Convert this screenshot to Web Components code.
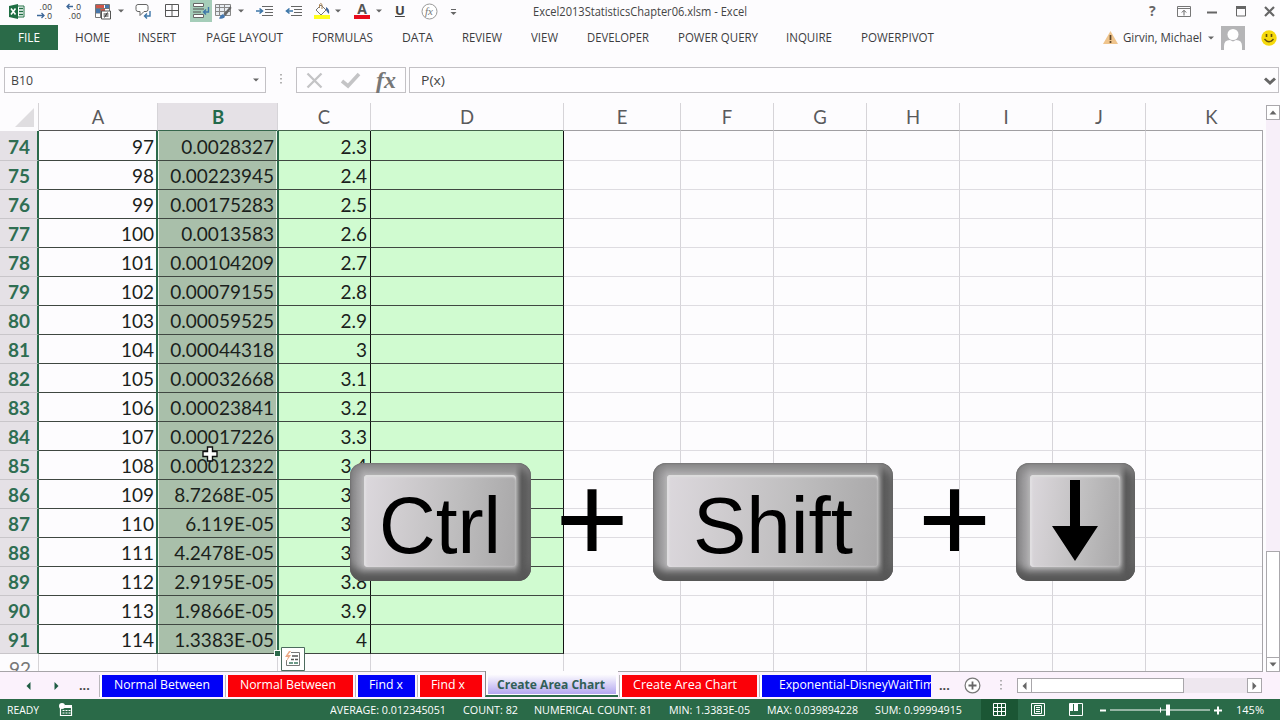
<!DOCTYPE html>
<html lang="en">
<head>
<meta charset="utf-8">
<title>Excel2013StatisticsChapter06.xlsm - Excel</title>
<style>
    body {
        margin: 0;
        width: 1280px;
        height: 720px;
        overflow: hidden;
        background: #fdfcfe;
        font-family: "Open Sans", "Noto Sans", sans-serif;
    }
</style>
</head>
<body>
<excel-window></excel-window>

<script>
const green = "#2a6a48";

const icons = {
    excel: [17, 17, `<path d="M1 3 10 1v15L1 14z" fill="#1f6e43"/><path d="M10 3h6v11h-6" fill="#fff" stroke="#1f6e43"/><path d="M11 5.5h4M11 8.5h4M11 11.5h4" stroke="#1f6e43" stroke-width="1.6"/><path d="m3 5.5 4.5 6M7.5 5.5 3 11.5" stroke="#fff" stroke-width="1.6"/>`],
    decLess: [16, 16, `<g font-family="Liberation Sans" font-size="8.500" fill="#444"><text x="2.500" y="6.500" textLength="12.500">.00</text><text x="7.500" y="16" textLength="7.500">.0</text></g><path d="M0 12.500h7M4.500 10l2.500 2.500-2.500 2.500" fill="none" stroke="#3d6799" stroke-width="1.300"/>`],
    decMore: [16, 16, `<g font-family="Liberation Sans" font-size="8.500" fill="#444"><text x="7.500" y="6.500" textLength="7.500">.0</text><text x="2.500" y="16" textLength="12.500">.00</text></g><path d="M7 3.500H1M3.500 1 1 3.500 3.500 6" fill="none" stroke="#3d6799" stroke-width="1.300"/>`],
    cond: [17, 17, `<path d="M.5 1.500h14v13h-14zM.5 5.500h14M.5 10h14M5.500 1v14" fill="#fff" stroke="#777"/><path d="M1 2h8v3H1zM6 6h4v3H6z" fill="#d05548"/><path d="M10 2h4v3h-4zM1 6h4v4H1z" fill="#4776ab"/><path d="M6.500 8h9v8h-9z" fill="#fff" stroke="#555"/><path d="M8.500 11h5M8.500 13h5M12.500 9.500l-3 5" stroke="#333"/>`],
    comment: [17, 17, `<path d="M3 1.500h8q2 0 2 2v3q0 2-2 2H9l-4 4v-4H3q-2 0-2-2v-3q0-2 2-2z" fill="#fff" stroke="#666"/><path d="M15 8v5h-5M12 10.500 9.500 13l2.500 2.500" fill="none" stroke="#3d76a8" stroke-width="1.400"/>`],
    borders: [14, 14, `<path d="M.5.5h13v12H.5zM7 .5v12M.5 6.500h13" fill="none" stroke="#555"/>`],
    wrap: [18, 17, `<path d="M1.500 1.500h10v3h-10zM1.500 12.500h10v3h-10z" fill="#fff" stroke="#666"/><path d="M1 7h11M1 10h8" stroke="#555"/><path d="M16.500 5v5H12m2-2.500L11.500 10l2.500 2.500" fill="none" stroke="#3d76a8" stroke-width="1.400"/>`],
    tableFmt: [17, 17, `<path d="M.5 1.500h15v11H.5zM.5 4.500h15M.5 8.500h15M4.500 1v12M9.500 1v12" fill="#e8edf2" stroke="#888"/><path d="m15.500 3-7 8 2 2 6-8z" fill="#666"/><path d="M8 11q-3 1-4 4.500 5 1 6-2.500z" fill="#4477b0"/>`],
    indent: [17, 13, `<path d="M6 1.500h11M9 4.500h8M9 7.500h8M6 10.500h11" stroke="#666"/><path d="M0 6h6M3.500 3.500 6.500 6l-3 2.500" fill="none" stroke="#3d76a8" stroke-width="1.600"/>`],
    outdent: [17, 13, `<path d="M5 1.500h11M8 4.500h8M8 7.500h8M5 10.500h11" stroke="#666"/><path d="M7 6H1M3.500 3.500.5 6l3 2.500" fill="none" stroke="#3d76a8" stroke-width="1.600"/>`],
    fill: [18, 17, `<path d="M1 12h16v4H1z" fill="#ffff1c"/><path d="m3 7 5-5 5 5-5 5z" fill="#fff" stroke="#777"/><path d="M6.500 5V1.500q1.500-2 2.500 0V6" fill="none" stroke="#a98557"/><path d="M13 4q4 2 3 7-2-2-3-4z" fill="#46699a"/>`],
    font: [16, 17, `<path d="M0 12h16v4H0z" fill="#e80c1c"/><text x="8" y="11" text-anchor="middle" font-size="14" font-weight="bold" fill="#555">A</text>`],
    fxRound: [17, 17, `<circle cx="8.500" cy="8.500" r="7.500" fill="#fff" stroke="#999"/><text x="8" y="12" text-anchor="middle" font-family="Liberation Serif" font-style="italic" font-size="11" fill="#777">fx</text>`],
    more: [7, 7, `<path d="M1 .5h5" stroke="#666"/><path d="M.5 3h6l-3 3z" fill="#666"/>`],
    caret: [6, 4, `<path d="M0 .5h6l-3 3z" fill="#666"/>`],
    ribbonOpts: [14, 11, `<path d="M.5.5h13v10H.5zM.5 2.500h13" fill="none" stroke="#777"/><path d="M7 9.500V4.500M4.800 6.500 7 4.300l2.200 2.200" fill="none" stroke="#666"/>`],
    min: [10, 3, `<path d="M0 1.500h10" stroke="#666" stroke-width="2"/>`],
    max: [10, 11, `<path d="M.5 1h9v9h-9z" fill="none" stroke="#666"/><path d="M0 1.500h10" stroke="#666" stroke-width="3"/>`],
    close: [11, 11, `<path d="m1 1 9 9M10 1l-9 9" stroke="#666" stroke-width="2.200"/>`],
    warn: [15, 13, `<path d="M7.500 0 15 13H0z" fill="#efc48c"/><path d="M7.500 4v5M7.500 10v2" stroke="#5c4326" stroke-width="1.700"/>`],
    person: [24, 24, `<path d="M0 0h24v24H0z" fill="#b5b5b7"/><circle cx="12" cy="8.500" r="5.500" fill="#fff"/><path d="M3 24v-4q0-6 6-6l3 1.500 3-1.500q6 0 6 6v4z" fill="#fff"/>`],
    smile: [16, 16, `<circle cx="8" cy="8" r="7.700" fill="#f5d90c"/><path d="M5.500 4v3M10.500 4v3" stroke="#604d10" stroke-width="1.600"/><path d="M3.500 9q4.500 5.500 9 0" fill="none" stroke="#604d10" stroke-width="1.300"/>`],
    dots: [2, 12, `<path d="M1 0v12" stroke="#999" stroke-width="1.500" stroke-dasharray="1.500 2.500"/>`],
    cancel: [18, 17, `<path d="m1.500 1.500 14 14M15.500 1.500l-14 14" stroke="#c4c4c6" stroke-width="2.300"/>`],
    enter: [19, 15, `<path d="m1 8 6 5L18 1" fill="none" stroke="#c4c4c6" stroke-width="3.600"/>`],
    expand: [12, 9, `<path d="m1 1.500 5 4.500 5-4.500" fill="none" stroke="#666" stroke-width="3"/>`],
    corner: [19, 19, `<path d="M19 0v19H0z" fill="#dfdde0"/>`],
    up: [8, 5, `<path d="M4 .5 7.500 4.500h-7z" fill="#666"/>`],
    down: [8, 5, `<path d="M4 4.500 7.500.5h-7z" fill="#666"/>`],
    left: [5, 8, `<path d="M4.500 0v8L.5 4z" fill="#666"/>`],
    right: [5, 8, `<path d="M.5 0v8l4-4z" fill="#666"/>`],
    prev: [5, 8, `<path d="M4.500 0v8L.5 4z" fill="#1e5c43"/>`],
    next: [5, 8, `<path d="M.5 0v8l4-4z" fill="#1e5c43"/>`],
    add: [17, 17, `<circle cx="8.500" cy="8.500" r="7.400" fill="#fff" stroke="#777" stroke-width="1.200"/><path d="M4.500 8.500h8M8.500 4.500v8" stroke="#666" stroke-width="1.800"/>`],
    macro: [14, 13, `<path d="M1.500 4.500h11v8h-11z" fill="none" stroke="#fff" stroke-width="1.200"/><path d="M6 3.500h7" stroke="#fff" stroke-width="3"/><path d="M3.500 7.500h8M3.500 10h8" stroke="#fff" stroke-dasharray="2 1"/><circle cx="3" cy="3" r="3" fill="#fff"/>`],
    viewNormal: [13, 13, `<path d="M.5.5h12v12H.5zM4.500 0v13M8.500 0v13M0 4.500h13M0 8.500h13" fill="none" stroke="#fff"/>`],
    viewPage: [14, 13, `<path d="M.5.5h13v12H.5zM3.500 2.500h7v8h-7zM5 4.500h4M5 6.500h4M5 8.500h4" fill="none" stroke="#fff"/>`],
    viewBreak: [14, 13, `<path d="M.5.5h13v12H.5z" fill="none" stroke="#fff"/><path d="M1 1h3v7H1zM5 1h4v7H5z" fill="#fff"/>`],
    zoom: [122, 12, `<path d="M0 6.500h6M114 6.500h8M118 2.500v8" stroke="#fff" stroke-width="2"/><path d="M10 6h100M60.500 3.500v5" stroke="#fff"/><path d="M66 .500h4v11h-4z" fill="#fff"/>`],
    quick: [24, 24, `<path d="M.5.500h23v23H.5z" fill="#fff" stroke="#4c6b5e"/><path d="M10 5.500h8.500v13h-13V13" fill="none" stroke="#777"/><path d="M11 9h6M10 12.500h3M14 12.500h3" stroke="#555" stroke-width="1.500"/><path d="M8 16h4M13 16h4" stroke="#3f7a63" stroke-width="1.500"/><path d="M8 4 4 10h3l-2 5 5-7H7l3-4z" fill="#eba987"/>`],
    cross: [16, 16, `<path d="M5.500 1h5v4.500H15v5h-4.500V15h-5v-4.500H1v-5h4.500z" fill="#fff" stroke="#111" stroke-width="1.400"/>`],
    arrow: [48, 82, `<path d="M19 0h10v46h18L24 81 1 46h18z" fill="#000"/>`]
};

class UiIcon extends HTMLElement {
    connectedCallback() {
        const [w, h, art] = icons[this.getAttribute("name")];
        this.attachShadow({ mode: "open" }).innerHTML = `
            <style>
                :host { display: inline-block; flex: none; width: ${w}px; height: ${h}px; }
                svg { display: block; overflow: visible; }
            </style>
            <svg width="${w}" height="${h}" viewBox="0 0 ${w} ${h}">${art}</svg>`;
    }
}
customElements.define("ui-icon", UiIcon);

// Label squeezed or stretched to a set width
class FitText extends HTMLElement {
    connectedCallback() {
        const width = Number(this.getAttribute("w"));
        this.attachShadow({ mode: "open" }).innerHTML = `
            <style>
                :host { display: inline-block; flex: none; width: ${width}px; white-space: nowrap; }
                span { display: inline-block; transform-origin: 0 50%; }
            </style>
            <span><slot></slot></span>`;
        const span = this.shadowRoot.querySelector("span");
        const natural = span.getBoundingClientRect().width;
        if (natural) {
            span.style.transform = `scaleX(${width / natural})`;
        }
    }
}
customElements.define("fit-text", FitText);

class TitleBar extends HTMLElement {
    connectedCallback() {
        this.attachShadow({ mode: "open" }).innerHTML = `
            <style>
                :host {
                    display: grid;
                    height: 25px;
                    grid-template-columns: 8px 29px 29px 29px 23px 17px 30px 25px 25px 23px 18px 30px 27px 22px 19px 22px 19px 26px 29px 83px 616px 28px 30px 29px 28px 1fr;
                    align-items: start;
                    font-size: 12px;
                    color: #444;
                }
                ui-icon { margin-top: 3px; }
                ui-icon[name="borders"] { margin-top: 4px; }
                ui-icon[name="caret"] { margin-top: 9px; }
                ui-icon[name="indent"], ui-icon[name="outdent"] { margin-top: 5px; }
                ui-icon[name="more"] { margin-top: 9px; }
                .on { display: flex; width: 22px; height: 22px; background: #a5cdb9; justify-content: center; }
                .on ui-icon { margin-top: 2px; }
                .u { font-weight: bold; font-size: 13px; line-height: 21px; text-decoration: underline; }
                .name { line-height: 23px; }
                .help { font-weight: bold; font-size: 14px; line-height: 22px; color: #666; }
                .min { margin-top: 11px; }
                .win { margin-top: 6px; }
            </style>
            <i></i>
            <ui-icon name="excel"></ui-icon>
            <ui-icon name="decLess"></ui-icon>
            <ui-icon name="decMore"></ui-icon>
            <ui-icon name="cond"></ui-icon>
            <ui-icon name="caret"></ui-icon>
            <ui-icon name="comment"></ui-icon>
            <ui-icon name="borders"></ui-icon>
            <div class="on"><ui-icon name="wrap"></ui-icon></div>
            <ui-icon name="tableFmt"></ui-icon>
            <ui-icon name="caret"></ui-icon>
            <ui-icon name="indent"></ui-icon>
            <ui-icon name="outdent"></ui-icon>
            <ui-icon name="fill"></ui-icon>
            <ui-icon name="caret"></ui-icon>
            <ui-icon name="font"></ui-icon>
            <ui-icon name="caret"></ui-icon>
            <span class="u">U</span>
            <ui-icon name="fxRound"></ui-icon>
            <ui-icon name="more"></ui-icon>
            <fit-text class="name" w="214">Excel2013StatisticsChapter06.xlsm - Excel</fit-text>
            <span class="help">?</span>
            <ui-icon class="win" name="ribbonOpts"></ui-icon>
            <ui-icon class="min" name="min"></ui-icon>
            <ui-icon class="win" name="max"></ui-icon>
            <ui-icon class="win" name="close"></ui-icon>`;
    }
}
customElements.define("title-bar", TitleBar);

class RibbonTabs extends HTMLElement {
    connectedCallback() {
        this.attachShadow({ mode: "open" }).innerHTML = `
            <style>
                :host {
                    display: grid;
                    height: 25px;
                    grid-template-columns: 58px 17px 63px 68px 106px 90px 60px 69px 56px 91px 108px 75px 242px 20px 85px 13px 40px 1fr;
                    align-items: center;
                    font-size: 12.5px;
                    line-height: 25px;
                    color: #3c3c3e;
                }
                .file { background: ${green}; color: #fff; height: 25px; text-align: center; }
            </style>
            <div class="file"><fit-text w="22">FILE</fit-text></div>
            <i></i>
            <fit-text w="35">HOME</fit-text>
            <fit-text w="38">INSERT</fit-text>
            <fit-text w="77">PAGE LAYOUT</fit-text>
            <fit-text w="61">FORMULAS</fit-text>
            <fit-text w="31">DATA</fit-text>
            <fit-text w="40">REVIEW</fit-text>
            <fit-text w="27">VIEW</fit-text>
            <fit-text w="62">DEVELOPER</fit-text>
            <fit-text w="80">POWER QUERY</fit-text>
            <fit-text w="46">INQUIRE</fit-text>
            <fit-text w="73">POWERPIVOT</fit-text>
            <ui-icon name="warn"></ui-icon>
            <fit-text w="79">Girvin, Michael</fit-text>
            <ui-icon name="caret"></ui-icon>
            <ui-icon name="person"></ui-icon>
            <ui-icon name="smile"></ui-icon>`;
    }
}
customElements.define("ribbon-tabs", RibbonTabs);

class FormulaBar extends HTMLElement {
    connectedCallback() {
        this.attachShadow({ mode: "open" }).innerHTML = `
            <style>
                :host {
                    display: flex;
                    height: 53px;
                    padding: 17px 1px 0 4px;
                    box-sizing: border-box;
                    font-size: 12px;
                    color: #444;
                }
                div {
                    display: flex;
                    height: 26px;
                    box-sizing: border-box;
                    border: 1px solid #c3c1c5;
                    background: #fefdff;
                    align-items: center;
                    justify-content: space-between;
                }
                .name { width: 262px; padding: 0 6px; }
                .sep { margin: 7px 14px 0 14px; }
                .tools { width: 110px; padding: 0 9px; }
                .fx { font: italic bold 24px/20px "Liberation Serif", serif; color: #777; }
                .input { flex: 1; margin-left: 3px; padding: 0 2px 0 11px; }
                .input ui-icon { margin-top: 3px; }
            </style>
            <div class="name"><fit-text w="22">B10</fit-text><ui-icon name="caret"></ui-icon></div>
            <ui-icon class="sep" name="dots"></ui-icon>
            <div class="tools">
                <ui-icon name="cancel"></ui-icon>
                <ui-icon name="enter"></ui-icon>
                <span class="fx">fx</span>
            </div>
            <div class="input"><fit-text w="24">P(x)</fit-text><ui-icon name="expand"></ui-icon></div>`;
    }
}
customElements.define("formula-bar", FormulaBar);

class SheetGrid extends HTMLElement {
    connectedCallback() {
        const density = ["0.0028327", "0.00223945", "0.00175283", "0.0013583", "0.00104209", "0.00079155",
            "0.00059525", "0.00044318", "0.00032668", "0.00023841", "0.00017226", "0.00012322",
            "8.7268E-05", "6.119E-05", "4.2478E-05", "2.9195E-05", "1.9866E-05", "1.3383E-05"];
        const heads = [..."ABCDEFGHIJK"].map(c => `<div class="head ${c}">${c}</div>`).join("");
        const rest = `<div class="cell"></div>`.repeat(7);
        const rows = density.map((p, i) => `
            <div class="num${i ? "" : " first"}">${74 + i}</div>
            <div class="cell a${i ? "" : " first"}">${97 + i}</div>
            <div class="cell b${i ? "" : " first"}">${p}</div>
            <div class="cell c${i ? "" : " first"}">${(23 + i) / 10}</div>
            <div class="cell d"></div>${rest}`).join("");
        this.attachShadow({ mode: "open" }).innerHTML = `
            <style>
                :host {
                    display: grid;
                    width: 1263px;
                    height: 569px;
                    box-sizing: border-box;
                    overflow: hidden;
                    grid-template-columns: 39px 119px 120px 93px 193px 117px repeat(5, 93px) 117px;
                    grid-template-rows: 28px 30px repeat(17, 29px) 18px;
                    border-bottom: 1px solid #a6a4a8;
                    font-family: Lato, sans-serif;
                    font-size: 19px;
                    color: #1b1f1c;
                }
                div { box-sizing: border-box; min-width: 0; }
                .corner { display: flex; justify-content: flex-end; align-items: flex-end; padding: 0 4px 4px 0; border-right: 1px solid #d5d3d6; }
                .head { line-height: 28px; text-align: center; color: #5a5a5c; font-size: 18.5px; border-right: 1px solid #d6d4d8; border-bottom: 1px solid #a09fa2; }
                .head.A { border-bottom-color: #555; }
                .head.B { background: #e5e1e6; color: #22694a; font-weight: bold; border-bottom-color: #35664c; padding-left: 1px; }
                .head.C, .head.D { border-bottom-color: #44644c; }
                .head.K { border-right: 0; padding-left: 14px; }
                .num { background: #e5e1e6; color: #2f6e52; font-weight: bold; line-height: 29px; padding-right: 7px; text-align: right; border-right: 2px solid #2c6a4b; border-bottom: 1px solid #c9c6ca; }
                .cell { border-right: 1px solid #d6d4d9; border-bottom: 1px solid #dedce1; line-height: 29px; text-align: right; padding-right: 3px; }
                .cell.a, .cell.b, .cell.c, .cell.d { border-bottom-color: #3f4741; }
                .a { border-right: 2px solid #2c6a4b; padding-right: 2px; }
                .b { background: #a9bfaa; border-right-color: #2c6a4b; box-shadow: inset 1px 0 #eef5ee, inset -1px 0 #eef5ee; padding-right: 3px; }
                .c { background: #d0fbd0; border-right-color: #111; box-shadow: inset 1px 0 #2c6a4b; padding-right: 3px; }
                .d { background: #d0fbd0; border-right-color: #111; }
                .first { line-height: 31px; }
                .last { border-bottom: 0; line-height: 30px; }
                .num.last { background: none; color: #777; font-weight: normal; border-right: 1px solid #d5d3d6; overflow: hidden; }
            </style>
            <div class="corner"><ui-icon name="corner"></ui-icon></div>${heads}
            ${rows}
            <div class="num last">92</div>${`<div class="cell last"></div>`.repeat(11)}`;
    }
}
customElements.define("sheet-grid", SheetGrid);

class VerticalScroll extends HTMLElement {
    connectedCallback() {
        this.attachShadow({ mode: "open" }).innerHTML = `
            <style>
                :host { display: flex; flex-direction: column; width: 14px; height: 567px; margin-top: 2px; margin-left: 3px; background: #f7eff9; }
                div { display: flex; box-sizing: border-box; align-items: center; justify-content: center; border: 1px solid #aaa8ac; background: #fff; height: 15px; }
                .thumb { margin-top: 431px; height: 106px; border-bottom: 0; }
            </style>
            <div><ui-icon name="up"></ui-icon></div>
            <div class="thumb"></div>
            <div><ui-icon name="down"></ui-icon></div>`;
    }
}
customElements.define("vertical-scroll", VerticalScroll);

class SheetTabs extends HTMLElement {
    connectedCallback() {
        this.attachShadow({ mode: "open" }).innerHTML = `
            <style>
                :host {
                    display: grid;
                    height: 27px;
                    box-sizing: border-box;
                    padding: 2px 0 3px;
                    grid-template-columns: 26px 28px 25px 20px 126px 130px 62px 67px 135px 140px 172px 8px 25px 36px 17px 1fr;
                    align-items: center;
                    background: #fbf2fc;
                    font-size: 12.5px;
                    color: #444;
                }
                .tab {
                    display: flex;
                    height: 22px;
                    box-sizing: border-box;
                    margin-right: 2px;
                    border-left: 1px solid #b9b7bb;
                    background: #fff;
                }
                .tab span { display: flex; flex: 1; margin-left: 2px; padding-left: 12px; align-items: center; overflow: hidden; color: #fff; line-height: 18px; padding-bottom: 1px; }
                .find span { padding-left: 11px; }
                .blue span { background: #0000f8; }
                .red span { background: #fb0008; }
                .active { height: 26px; align-self: start; margin-top: -3px; margin-left: 1px; margin-right: 1px; padding: 0 2px 1px; border-bottom: 2px solid #2c6a4b; border-left-color: #888; background: #fdfcfe; }
                .active span { background: linear-gradient(#fdfcfe 15%, #b3a6f0); color: #315f56; font-weight: bold; margin-left: 0; padding: 4px 0 0 9px; }
                .wide { margin-right: 2px; }
                .clip { margin-right: 0; }
                .clip span { padding-left: 17px; }
                b { color: #444; line-height: 14px; }
                .scroll { display: flex; width: 245px; height: 15px; background: #eee7ef; justify-content: space-between; }
                .scroll div { display: flex; box-sizing: border-box; border: 1px solid #a8a6aa; background: #fff; width: 15px; align-items: center; justify-content: center; }
                .scroll .thumb { width: 153px; margin: 0 auto 0 -1px; }
            </style>
            <i></i>
            <ui-icon name="prev"></ui-icon>
            <ui-icon name="next"></ui-icon>
            <b>...</b>
            <div class="tab blue"><span><fit-text w="96">Normal Between</fit-text></span></div>
            <div class="tab red"><span><fit-text w="96">Normal Between</fit-text></span></div>
            <div class="tab blue find"><span><fit-text w="34">Find x</fit-text></span></div>
            <div class="tab red find"><span><fit-text w="34">Find x</fit-text></span></div>
            <div class="tab active"><span><fit-text w="108">Create Area Chart</fit-text></span></div>
            <div class="tab red wide find"><span><fit-text w="104">Create Area Chart</fit-text></span></div>
            <div class="tab blue clip"><span><fit-text w="162">Exponential-DisneyWaitTime</fit-text></span></div>
            <i></i>
            <b>...</b>
            <ui-icon name="add"></ui-icon>
            <ui-icon name="dots"></ui-icon>
            <div class="scroll">
                <div><ui-icon name="left"></ui-icon></div>
                <div class="thumb"></div>
                <div><ui-icon name="right"></ui-icon></div>
            </div>`;
    }
}
customElements.define("sheet-tabs", SheetTabs);

class StatusBar extends HTMLElement {
    connectedCallback() {
        this.attachShadow({ mode: "open" }).innerHTML = `
            <style>
                :host {
                    display: grid;
                    height: 21px;
                    grid-template-columns: 7px 52px 271px 133px 71px 135px 98px 108px 106px 50px 38px 31px 1fr 44px;
                    align-items: center;
                    background: ${green};
                    color: #fff;
                    font-size: 11.5px;
                    line-height: 21px;
                }
                .view { display: flex; width: 37px; height: 21px; background: #1b5634; align-items: center; justify-content: center; }
            </style>
            <i></i>
            <fit-text w="32">READY</fit-text>
            <ui-icon name="macro"></ui-icon>
            <fit-text w="116">AVERAGE: 0.012345051</fit-text>
            <fit-text w="55">COUNT: 82</fit-text>
            <fit-text w="118">NUMERICAL COUNT: 81</fit-text>
            <fit-text w="81">MIN: 1.3383E-05</fit-text>
            <fit-text w="91">MAX: 0.039894228</fit-text>
            <fit-text w="87">SUM: 0.99994915</fit-text>
            <div class="view"><ui-icon name="viewNormal"></ui-icon></div>
            <ui-icon name="viewPage"></ui-icon>
            <ui-icon name="viewBreak"></ui-icon>
            <ui-icon name="zoom"></ui-icon>
            <fit-text w="28">145%</fit-text>`;
    }
}
customElements.define("status-bar", StatusBar);

class KeyCap extends HTMLElement {
    connectedCallback() {
        this.attachShadow({ mode: "open" }).innerHTML = `
            <style>
                :host {
                    display: block;
                    flex: none;
                    box-sizing: border-box;
                    width: ${this.getAttribute("w")}px;
                    height: 118px;
                    padding: 12px 15px 14px 14px;
                    border-radius: 13px;
                    overflow: hidden;
                    background: linear-gradient(90deg, #838284, #b0afb1 14px, #9c9c9c calc(100% - 16px), #5a5a5a calc(100% - 9px), #666);
                    box-shadow: inset 0 0 2px #555, inset 0 9px 8px -3px #858485, inset 0 -13px 7px -3px #585858;
                    font: 80px/84px "Liberation Sans", Arial, sans-serif;
                    color: #000;
                }
                div {
                    display: flex;
                    height: 92px;
                    border-radius: 4px;
                    align-items: center;
                    justify-content: center;
                    background: linear-gradient(97deg, #dcd8dd, #d0cdd0 25%, #bebdbe 60%, #a8a7a8);
                    box-shadow: 0 0 3px 1px #b4b3b4, inset 0 2px 2px #ddd, inset 2px 0 2px #e2e0e3;
                }
            </style>
            <div><slot></slot></div>`;
    }
}
customElements.define("key-cap", KeyCap);

class ExcelWindow extends HTMLElement {
    connectedCallback() {
        this.attachShadow({ mode: "open" }).innerHTML = `
            <style>
                :host { display: flex; flex-direction: column; position: relative; width: 1280px; height: 720px; overflow: hidden; }
                .sheet { display: flex; }
                .edge { width: 1px; height: 541px; margin: 27px 0 0 -1px; background: #a6a4a8; }
                .keys { position: absolute; left: 350px; top: 463px; display: flex; align-items: center; }
                .plus { width: 122px; height: 118px; text-align: center; font: 126px/111px "Liberation Sans", Arial, sans-serif; color: #000; }
                .plus + key-cap + .plus { width: 123px; }
                .ctrl { margin-top: 9px; }
                .handle { position: absolute; left: 274px; top: 650px; width: 5px; height: 5px; background: #2c6a4b; border: 1px solid #fff; }
                .quick { position: absolute; left: 281px; top: 647px; }
                .cursor { position: absolute; left: 202px; top: 446px; }
            </style>
            <title-bar></title-bar>
            <ribbon-tabs></ribbon-tabs>
            <formula-bar></formula-bar>
            <div class="sheet">
                <sheet-grid></sheet-grid>
                <div class="edge"></div>
                <vertical-scroll></vertical-scroll>
            </div>
            <sheet-tabs></sheet-tabs>
            <status-bar></status-bar>
            <div class="handle"></div>
            <ui-icon class="quick" name="quick"></ui-icon>
            <ui-icon class="cursor" name="cross"></ui-icon>
            <div class="keys">
                <key-cap w="181"><fit-text class="ctrl" w="122">Ctrl</fit-text></key-cap>
                <div class="plus">+</div>
                <key-cap w="240"><fit-text class="ctrl" w="160">Shift</fit-text></key-cap>
                <div class="plus">+</div>
                <key-cap w="119"><ui-icon name="arrow"></ui-icon></key-cap>
            </div>`;
    }
}
customElements.define("excel-window", ExcelWindow);
</script>
</body>
</html>
